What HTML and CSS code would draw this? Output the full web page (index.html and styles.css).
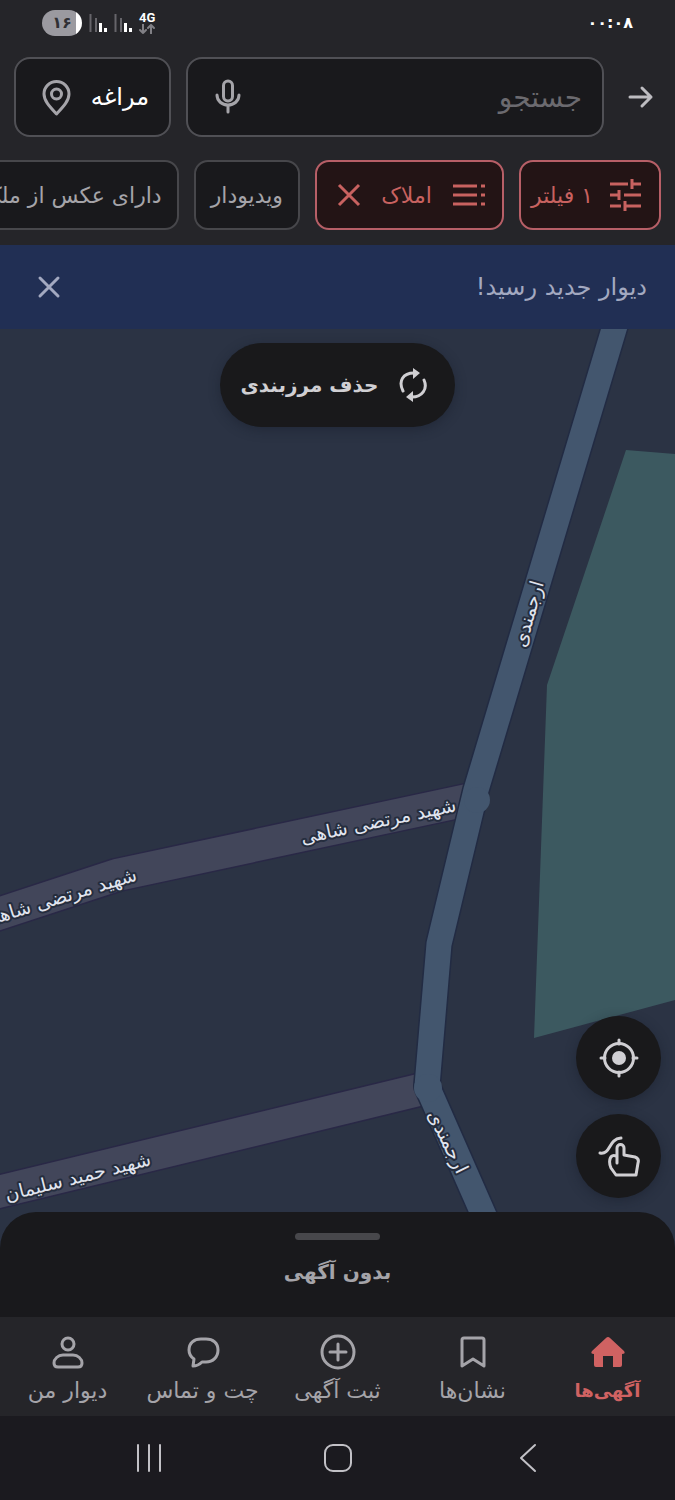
FILE: index.html
```html
<!DOCTYPE html>
<html lang="fa" dir="rtl">

<head>
    <meta charset="UTF-8">
    <meta name="viewport" content="width=device-width, initial-scale=1">
    <title>دیوار</title>
    <link rel="stylesheet" href="styles.css">
</head>

<body>
    <div class="app">
        <!-- status bar -->
        <div class="status">
            <span class="time">۰۰:۰۸</span>
            <div class="status-icons">
                <span class="network">
                    <b>4G</b>
                    <svg width="16" height="10" viewBox="0 0 16 10"><path d="M4 0v9M1 6l3 3 3-3M12 9.500V1M9 4l3-3 3 3" /></svg>
                </span>
                <svg class="signal" width="18" height="20" viewBox="0 0 18 20"><path class="dim" d="M1.500 1v18M7 5v14" /><path d="M11.500 10v9M16.500 15v4" /></svg>
                <svg class="signal" width="18" height="20" viewBox="0 0 18 20"><path class="dim" d="M1.500 1v18M7 5v14" /><path d="M11.500 10v9M16.500 15v4" /></svg>
                <span class="battery">۱۶</span>
            </div>
        </div>

        <!-- search -->
        <header class="top">
            <button class="back" type="button" aria-label="بازگشت">
                <svg width="28" height="28" viewBox="0 0 28 28"><path d="M4 14h21M16 5l9 9-9 9" /></svg>
            </button>
            <form class="search">
                <input type="text" placeholder="جستجو" aria-label="جستجو">
                <button type="button" aria-label="جستجوی صوتی">
                    <svg width="28" height="36" viewBox="0 0 28 36"><rect x="9.500" y="2" width="9" height="20" rx="4.500" /><path d="M3 16c0 6 5 10 11 10s11-4 11-10M14 26v7" /></svg>
                </button>
            </form>
            <button class="city" type="button">
                <span>مراغه</span>
                <svg width="32" height="38" viewBox="0 0 32 38"><path d="M16.500 36C10 29 4 23 4 16a12.500 12.500 0 0 1 25 0c0 7-6 13-12.500 20z" /><circle cx="16.500" cy="16" r="5" /></svg>
            </button>
        </header>

        <!-- filters -->
        <div class="chips">
            <button class="chip active filter" type="button">
                <svg width="34" height="34" viewBox="0 0 34 34"><path d="M1 6h18M22 6h10M23 1v10M1 17h9M10 12v10M15 17h17M1 28h11M16 28h16M16 23v10" /></svg>
                <span>۱ فیلتر</span>
            </button>
            <button class="chip active category" type="button">
                <svg width="34" height="26" viewBox="0 0 34 26"><path d="M1 4h24M1 13h24M1 22h24M29 4h4M29 13h4M29 22h4" /></svg>
                <span>املاک</span>
                <svg width="24" height="24" viewBox="0 0 24 24"><path d="M2 2l20 20M22 2L2 22" /></svg>
            </button>
            <button class="chip" type="button">ویدیودار</button>
            <button class="chip" type="button">دارای عکس از ملک</button>
        </div>

        <!-- banner -->
        <div class="banner">
            <a href="#">دیوار جدید رسید!</a>
            <button type="button" aria-label="بستن">
                <svg width="26" height="26" viewBox="0 0 26 26"><path d="M4 4l18 18M22 4L4 22" /></svg>
            </button>
        </div>

        <!-- map -->
        <main class="map">
            <svg class="map-canvas" viewBox="0 329 675 919" preserveAspectRatio="xMidYMin slice">
                <path class="park" d="M626 450L675 454L900 470V940L675 1000L534 1038L547 685z" />
                <g class="alley-case">
                    <path d="M477 798L117 875L-60 933" />
                    <path d="M427 1088L-60 1206" />
                </g>
                <g class="alley">
                    <path d="M477 798L117 875L-60 933" />
                    <path d="M427 1088L-60 1206" />
                </g>
                <path class="street-case" d="M620 309L476 790L439 944L427 1086L500 1252" />
                <path class="street" d="M620 309L476 790L439 944L427 1086L500 1252" />
                <circle class="joint" cx="477" cy="800" r="13" />
                <circle class="joint" cx="428" cy="1088" r="14" />
                <g class="road-names">
                    <text transform="translate(544 583) rotate(-74)">ارجمندی</text>
                    <text transform="translate(457 1175) rotate(64)">ارجمندی</text>
                    <text transform="translate(457 811) rotate(-12)">شهید مرتضی شاهی</text>
                    <text transform="translate(138 880) rotate(-17)">شهید مرتضی شاهی</text>
                    <text transform="translate(152 1165) rotate(-14)">شهید حمید سلیمان</text>
                </g>
            </svg>
            <button class="clear-area" type="button">
                <svg width="28" height="34" viewBox="0 0 28 34"><path d="M4 23C-1 13 4 5 15 5M25 12c4 9-2 17-12 17" /><path class="head" d="M14 0l7 5-7 6zM14 34l-7-5 7-6z" /></svg>
                <span>حذف مرزبندی</span>
            </button>
            <div class="map-tools">
                <button type="button" aria-label="موقعیت من">
                    <svg width="40" height="40" viewBox="0 0 40 40"><circle cx="20" cy="20" r="14.500" /><circle class="head" cx="20" cy="20" r="7" /><path d="M20 2v4M20 34v4M2 20h4M34 20h4" /></svg>
                </button>
                <button type="button" aria-label="رسم محدوده">
                    <svg width="42" height="42" viewBox="0 0 42 42"><path d="M2 18c11 2 8-14 21-15" /><path d="M19 28V13a3.500 3.500 0 0 1 7 0v7l11 2c3 1 4 3 3 6l-2 12H18l-5-7c-2-4-2-10 1-12 2-1 4 0 5 1" /></svg>
                </button>
            </div>
        </main>

        <!-- bottom sheet -->
        <section class="sheet">
            <div class="handle"></div>
            <h1>بدون آگهی</h1>
        </section>

        <nav class="tabs">
            <a class="current" href="#">
                <svg width="36" height="36" viewBox="0 0 36 36"><path d="M16 4q2-2 4 0l14 13q2 3-2 3v11q0 2-2 2h-7V22H13v11H6q-2 0-2-2V20Q0 20 2 17z" /></svg>
                <span>آگهی‌ها</span>
            </a>
            <a href="#">
                <svg width="36" height="36" viewBox="0 0 36 36"><path d="M7 32V6q0-2 2-2h18q2 0 2 2v26l-11-7z" /></svg>
                <span>نشان‌ها</span>
            </a>
            <a href="#">
                <svg width="36" height="36" viewBox="0 0 36 36"><circle cx="18" cy="18" r="16" /><path d="M18 10v16M10 18h16" /></svg>
                <span>ثبت آگهی</span>
            </a>
            <a href="#">
                <svg width="36" height="36" viewBox="0 0 36 36"><path d="M8 32l1-7C6 23 4 20 4 16 4 9 9 5 16 5h5c7 0 12 4 12 11s-5 12-12 12h-4c-2 2-5 4-9 4z" /></svg>
                <span>چت و تماس</span>
            </a>
            <a href="#">
                <svg width="36" height="36" viewBox="0 0 36 36"><circle cx="18" cy="10" r="6" /><path d="M13 21h10c5 0 9 4 9 8q0 4-4 4H8q-4 0-4-4c0-4 4-8 9-8z" /></svg>
                <span>دیوار من</span>
            </a>
        </nav>

        <!-- android buttons -->
        <div class="system">
            <button type="button" aria-label="قبلی">
                <svg width="30" height="30" viewBox="0 0 30 30"><path d="M22 2L8 15l14 13" /></svg>
            </button>
            <button type="button" aria-label="خانه">
                <svg width="30" height="30" viewBox="0 0 30 30"><rect x="2" y="2" width="26" height="26" rx="8" /></svg>
            </button>
            <button type="button" aria-label="برنامه‌های اخیر">
                <svg width="30" height="30" viewBox="0 0 30 30"><path d="M5 2v26M16 2v26M27 2v26" /></svg>
            </button>
        </div>
    </div>
</body>

</html>
```
FILE: styles.css
```css
* {
    margin: 0;
    padding: 0;
    box-sizing: border-box;
}

body,
button,
input {
    font-family: "DejaVu Sans", sans-serif;
    font-size: 22px;
}

body {
    background-color: #252529;
    color: #a5a4a9;
}

button {
    border: none;
    background: none;
    color: inherit;
    cursor: pointer;
}

a {
    color: inherit;
    text-decoration: none;
}

svg {
    display: block;
    flex: none;
    fill: none;
    stroke: currentColor;
    stroke-width: 3px;
    stroke-linecap: round;
    stroke-linejoin: round;
}

.head {
    fill: currentColor;
    stroke: none;
}

.app {
    display: flex;
    flex-direction: column;
    min-height: 100vh;
    overflow: hidden;
}

/* status bar */
.status {
    display: flex;
    justify-content: space-between;
    align-items: center;
    height: 57px;
    padding: 0 42px 12px;
    color: #fff;
}

.time {
    font-size: 16px;
    font-weight: bold;
}

.status-icons {
    display: flex;
    align-items: center;
    gap: 7px;
}

.network b {
    display: block;
    font-family: Roboto, sans-serif;
    font-size: 13px;
    line-height: 13px;
}

.network svg {
    color: #818085;
    stroke-width: 2px;
}

.signal {
    stroke-linecap: butt;
}

.signal .dim {
    stroke: #66656a;
    stroke-width: 2px;
}

.battery {
    width: 40px;
    height: 26px;
    border-radius: 13px;
    background: linear-gradient(to left, #fff 15%, #9b9aa0 15%);
    color: #303034;
    font-size: 16px;
    font-weight: bold;
    line-height: 26px;
    text-align: center;
}

/* search */
.top {
    display: flex;
    gap: 15px;
    height: 80px;
    padding: 0 14px;
}

.back {
    display: flex;
    justify-content: center;
    align-items: center;
    width: 42px;
    color: #bdbcc0;
}

.search,
.city {
    display: flex;
    align-items: center;
    border: 2px solid #505055;
    border-radius: 16px;
    background-color: #19191c;
}

.search {
    flex: 1;
    min-width: 0;
    padding: 0 20px 0 26px;
}

.search input {
    flex: 1;
    min-width: 0;
    height: 60px;
    border: none;
    outline: none;
    background: none;
    color: #fff;
    font-size: 28px;
}

.search input::placeholder {
    color: #6b6a6f;
    opacity: 1;
}

.city {
    justify-content: space-between;
    width: 157px;
    padding: 0 20px 0 24px;
}

.city span {
    color: #fff;
    font-size: 24px;
}

/* filters */
.chips {
    display: flex;
    gap: 15px;
    padding: 23px 14px 15px;
    overflow: hidden;
}

.chip {
    display: flex;
    flex: none;
    justify-content: space-between;
    align-items: center;
    height: 70px;
    padding: 0 15px;
    border: 2px solid #47474b;
    border-radius: 14px;
    background-color: #19191c;
    white-space: nowrap;
}

.chip.active {
    border-color: #b75f67;
    background-color: #231415;
    color: #c86260;
}

.chip svg {
    stroke-linecap: butt;
}

.filter {
    width: 142px;
    padding: 0 16px 0 10px;
}

.category {
    width: 189px;
    padding: 0 16px 0 20px;
}

/* banner */
.banner {
    display: flex;
    justify-content: space-between;
    align-items: center;
    height: 84px;
    padding: 0 28px 0 36px;
    background-color: #212f54;
    color: #a3a9c0;
}

.banner a {
    font-size: 24px;
}

/* map */
.map {
    position: relative;
    display: flex;
    flex: 1;
    flex-direction: column;
    justify-content: space-between;
    min-height: 500px;
    padding: 14px 14px 50px;
    background-color: #2b3344;
}

.map-canvas {
    position: absolute;
    top: 0;
    left: 0;
    width: 100%;
    height: 100%;
}

.park {
    fill: #3c5960;
    stroke: none;
}

.alley-case,
.alley {
    stroke-linecap: butt;
}

.alley-case {
    stroke: #292846;
    stroke-width: 35px;
}

.alley {
    stroke: #42465a;
    stroke-width: 32px;
}

.street-case {
    stroke: #222b43;
    stroke-width: 28px;
}

.street {
    stroke: #43566e;
    stroke-width: 25px;
}

.joint {
    fill: #43566e;
    stroke: none;
}

.road-names {
    fill: #e1e5ef;
    stroke: #252d3e;
    stroke-width: 4px;
    paint-order: stroke;
    font-size: 19px;
}

.clear-area,
.map-tools button {
    position: relative;
    background-color: #19191b;
    color: #d0cfd3;
    box-shadow: 0 3px 12px rgba(20, 25, 38, 0.4);
}

.clear-area {
    display: flex;
    align-self: center;
    justify-content: space-between;
    align-items: center;
    gap: 20px;
    min-width: 234px;
    height: 84px;
    padding: 0 28px 0 20px;
    border-radius: 42px;
    font-size: 20px;
    font-weight: bold;
}

.map-tools {
    display: flex;
    flex-direction: column;
    align-self: flex-start;
    gap: 14px;
}

.map-tools button {
    display: flex;
    justify-content: center;
    align-items: center;
    width: 85px;
    height: 84px;
    border-radius: 50%;
}

/* bottom sheet */
.sheet {
    position: relative;
    height: 105px;
    margin-top: -36px;
    padding-top: 21px;
    border-radius: 36px 36px 0 0;
    background-color: #19191c;
    text-align: center;
}

.handle {
    width: 85px;
    height: 7px;
    margin: 0 auto 16px;
    border-radius: 4px;
    background-color: #47474b;
}

.sheet h1 {
    font-size: 20px;
    line-height: 32px;
}

/* tabs */
.tabs {
    display: flex;
    height: 99px;
    padding-top: 17px;
    background-color: #252529;
}

.tabs a {
    display: flex;
    flex: 1;
    flex-direction: column;
    align-items: center;
    gap: 6px;
    font-size: 22px;
    line-height: 30px;
    white-space: nowrap;
}

.tabs .current {
    color: #d06262;
    font-size: 18px;
    font-weight: bold;
}

.current svg {
    fill: currentColor;
    stroke: none;
}

/* android buttons */
.system {
    display: flex;
    justify-content: center;
    align-items: center;
    gap: 160px;
    height: 84px;
    background-color: #1b1a1f;
    color: #c2c1c6;
}

.system svg {
    stroke-width: 2px;
}
```
